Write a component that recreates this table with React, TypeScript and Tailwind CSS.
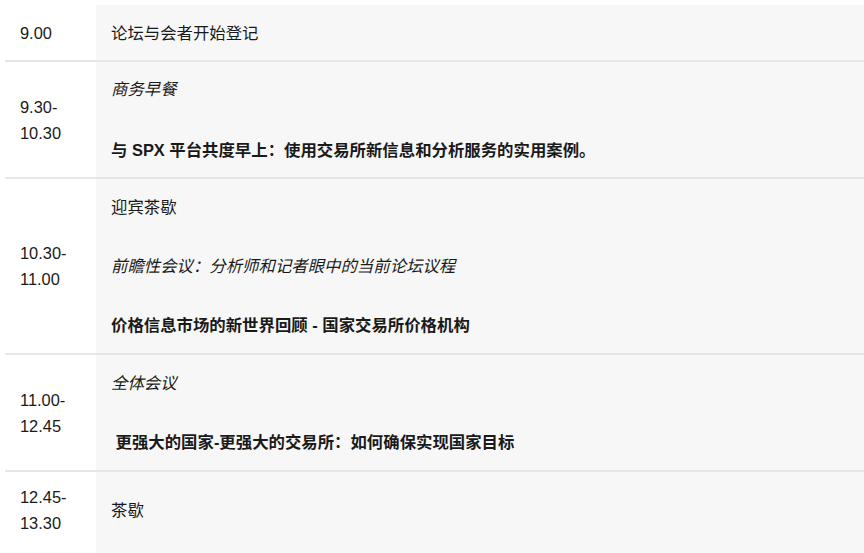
const font = {
  fontFamily:
    '"Liberation Sans", Arial, "Noto Sans CJK SC", sans-serif',
};

type Line = { text: string; kind: "plain" | "italic" | "bold" };

type Row = { time: string[]; lines: Line[]; pad: string; gap?: string };

const rows: Row[] = [
  {
    time: ["9.00"],
    pad: "pt-[15px] pb-[14px]",
    lines: [{ text: "论坛与会者开始登记", kind: "plain" }],
  },
  {
    time: ["9.30-", "10.30"],
    pad: "pt-[14px] pb-[14px]",
    gap: "gap-[35px]",
    lines: [
      { text: "商务早餐", kind: "italic" },
      {
        text: "与 SPX 平台共度早上：使用交易所新信息和分析服务的实用案例。",
        kind: "bold",
      },
    ],
  },
  {
    time: ["10.30-", "11.00"],
    pad: "pt-[15px] pb-[15px]",
    lines: [
      { text: "迎宾茶歇", kind: "plain" },
      { text: "前瞻性会议：分析师和记者眼中的当前论坛议程", kind: "italic" },
      { text: "价格信息市场的新世界回顾 - 国家交易所价格机构", kind: "bold" },
    ],
  },
  {
    time: ["11.00-", "12.45"],
    pad: "pt-[15px] pb-[15px]",
    lines: [
      { text: "全体会议", kind: "italic" },
      {
        text: "\u00a0更强大的国家-更强大的交易所：如何确保实现国家目标",
        kind: "bold",
      },
    ],
  },
  {
    time: ["12.45-", "13.30"],
    pad: "pt-[12px] pb-[20px]",
    lines: [{ text: "茶歇", kind: "plain" }],
  },
];

const kindClass = {
  plain: "",
  italic: "italic",
  bold: "font-bold",
};

export default function App() {
  return (
    <div
      className="min-h-[553px] bg-white pl-[5px] pt-[5px] text-[16.4px] leading-[26px] text-[#1a1a1a]"
      style={font}
    >
      {rows.map((row, i) => (
        <div
          key={i}
          className={`flex ${i < rows.length - 1 ? "border-b-2 border-[#e6e6e6]" : ""}`}
        >
          <div
            className={`flex w-[91px] shrink-0 flex-col justify-center pl-[15px] ${row.pad}`}
          >
            {row.time.map((t) => (
              <div key={t} className="h-[26px] overflow-visible">
                {t}
              </div>
            ))}
          </div>
          <div
            className={`flex flex-1 flex-col justify-center bg-[#f7f7f7] pl-[15px] ${row.pad} ${row.gap ?? "gap-[33px]"}`}
          >
            {row.lines.map((l) => (
              <div
                key={l.text}
                className={`h-[26px] overflow-visible whitespace-nowrap ${kindClass[l.kind]}`}
              >
                {l.text}
              </div>
            ))}
          </div>
        </div>
      ))}
    </div>
  );
}
